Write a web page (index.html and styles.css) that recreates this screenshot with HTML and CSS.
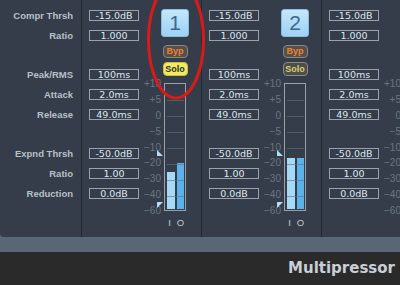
FILE: index.html
```html
<!DOCTYPE html>
<html>
<head>
  <meta charset="UTF-8">
  <title>Multipressor</title>
  <link rel="stylesheet" href="styles.css">
</head>
<body>
  <div class="plugin">
    <div class="window">
      <div class="panel">
        <div class="fields labels">
          <div class="group">
            <div class="row">Compr Thrsh</div>
            <div class="row">Ratio</div>
          </div>
          <div class="group">
            <div class="row">Peak/RMS</div>
            <div class="row">Attack</div>
            <div class="row">Release</div>
          </div>
          <div class="group">
            <div class="row">Expnd Thrsh</div>
            <div class="row">Ratio</div>
            <div class="row">Reduction</div>
          </div>
        </div>

        <!-- band 1 -->
        <div class="band">
          <div class="fields values">
            <div class="group">
              <div class="value">-15.0dB</div>
              <div class="value">1.000</div>
            </div>
            <div class="group">
              <div class="value">100ms</div>
              <div class="value">2.0ms</div>
              <div class="value">49.0ms</div>
            </div>
            <div class="group">
              <div class="value">-50.0dB</div>
              <div class="value">1.00</div>
              <div class="value">0.0dB</div>
            </div>
          </div>
          <div class="scale">
            <span>+10</span><span>+5</span><span>0</span><span>−5</span><span>−10</span>
            <span>−20</span><span>−30</span><span>−40</span><span>−60</span>
          </div>
          <div class="strip">
            <div class="num">1</div>
            <div class="btn byp">Byp</div>
            <div class="btn solo on">Solo</div>
            <div class="meter">
              <div class="bar in" style="height:37px"></div>
              <div class="bar out" style="height:46px"></div>
              <svg class="mark comp" width="6" height="6" viewBox="0 0 6 6"><polygon points="0,0 0,6 6,6"/></svg>
              <svg class="mark expd" width="6" height="6" viewBox="0 0 6 6"><polygon points="0,0 6,0 0,6"/></svg>
            </div>
            <div class="io"><span>I</span><span>O</span></div>
          </div>
        </div>

        <!-- band 2 -->
        <div class="band">
          <div class="fields values">
            <div class="group">
              <div class="value">-15.0dB</div>
              <div class="value">1.000</div>
            </div>
            <div class="group">
              <div class="value">100ms</div>
              <div class="value">2.0ms</div>
              <div class="value">49.0ms</div>
            </div>
            <div class="group">
              <div class="value">-50.0dB</div>
              <div class="value">1.00</div>
              <div class="value">0.0dB</div>
            </div>
          </div>
          <div class="scale">
            <span>+10</span><span>+5</span><span>0</span><span>−5</span><span>−10</span>
            <span>−20</span><span>−30</span><span>−40</span><span>−60</span>
          </div>
          <div class="strip">
            <div class="num">2</div>
            <div class="btn byp">Byp</div>
            <div class="btn solo">Solo</div>
            <div class="meter">
              <div class="bar in" style="height:51px"></div>
              <div class="bar out" style="height:51px"></div>
              <svg class="mark comp" width="6" height="6" viewBox="0 0 6 6"><polygon points="0,0 0,6 6,6"/></svg>
              <svg class="mark expd" width="6" height="6" viewBox="0 0 6 6"><polygon points="0,0 6,0 0,6"/></svg>
            </div>
            <div class="io"><span>I</span><span>O</span></div>
          </div>
        </div>

        <!-- band 3 -->
        <div class="band">
          <div class="fields values">
            <div class="group">
              <div class="value">-15.0dB</div>
              <div class="value">1.000</div>
            </div>
            <div class="group">
              <div class="value">100ms</div>
              <div class="value">2.0ms</div>
              <div class="value">49.0ms</div>
            </div>
            <div class="group">
              <div class="value">-50.0dB</div>
              <div class="value">1.00</div>
              <div class="value">0.0dB</div>
            </div>
          </div>
          <div class="scale">
            <span>+10</span><span>+5</span><span>0</span><span>−5</span><span>−10</span>
            <span>−20</span><span>−30</span><span>−40</span><span>−60</span>
          </div>
          <div class="strip">
            <div class="num">3</div>
            <div class="btn byp">Byp</div>
            <div class="btn solo">Solo</div>
            <div class="meter">
              <div class="bar in" style="height:40px"></div>
              <div class="bar out" style="height:40px"></div>
            </div>
            <div class="io"><span>I</span><span>O</span></div>
          </div>
        </div>
      </div>
    </div>

    <div class="footer">Multipressor</div>

    <!-- red annotation ring drawn over band 1 -->
    <svg class="ring" width="60" height="120" viewBox="0 0 60 120">
      <ellipse cx="30" cy="60" rx="27.5" ry="58" fill="none" stroke="#d91a1a" stroke-width="3"/>
    </svg>
  </div>
</body>
</html>
```

FILE: styles.css
```css
body {
  margin: 0;
  width: 400px;
  height: 285px;
  overflow: hidden;
  background-color: #2a2a2a;
  font-family: "Liberation Sans", Arial, sans-serif;
}
.plugin {
  position: relative;
  height: 285px;
  overflow: hidden;
}
.window {
  height: 252px;
  background-color: #596676;
}
.panel {
  display: flex;
  height: 237px;
  background-color: #343d49;
  border-bottom-left-radius: 4px;
  overflow: hidden;
}
.fields {
  display: flex;
  flex-direction: column;
  padding-top: 10px;
}
.group {
  display: flex;
  flex-direction: column;
  gap: 9px;
}
.group + .group {
  margin-top: 28px;
}
.labels {
  flex: none;
  width: 81px;
  box-sizing: border-box;
  padding-right: 8px;
}
.row {
  height: 11px;
  line-height: 11px;
  text-align: right;
  font-size: 9.5px;
  font-weight: bold;
  color: #b8c0c9;
  white-space: nowrap;
}
.band {
  flex: none;
  display: flex;
  width: 120px;
  box-sizing: border-box;
  border-left: 1px solid #222931;
}
.values {
  flex: none;
  width: 50px;
  margin-left: 7px;
}
.value {
  height: 11px;
  box-sizing: border-box;
  border: 1px solid #9aa3ad;
  font-family: "DejaVu Sans", sans-serif;
  font-size: 9.5px;
  line-height: 9px;
  text-align: center;
  color: #dfe6ee;
}
.scale {
  flex: none;
  width: 22px;
  height: 137px;
  margin-top: 79px;
  display: flex;
  flex-direction: column;
  justify-content: space-between;
  align-items: flex-end;
}
.scale span {
  font-size: 10px;
  line-height: 10px;
  color: #6b7581;
}
.strip {
  flex: none;
  width: 28px;
  display: flex;
  flex-direction: column;
  align-items: center;
}
.num {
  margin-top: 9px;
  width: 28px;
  height: 28px;
  box-sizing: border-box;
  border: 1px solid #86bde0;
  border-radius: 3px;
  background: linear-gradient(#c4e7fb, #9dd1f2);
  color: #3c6892;
  font-size: 21px;
  line-height: 26px;
  text-align: center;
}
.btn {
  width: 25px;
  box-sizing: border-box;
  border: 1px solid #8a8885;
  border-radius: 4px;
  font-size: 9px;
  font-weight: bold;
  text-align: center;
}
.byp {
  margin-top: 8px;
  height: 13px;
  line-height: 11px;
  background-color: #564f4c;
  color: #ea842f;
}
.solo {
  margin-top: 4px;
  height: 14px;
  line-height: 12px;
  background-color: #4b4e4d;
  border-color: #8f8d78;
  color: #d9d26c;
}
.solo.on {
  background-color: #f4ea62;
  border-color: #c9c043;
  color: #2d2d2d;
}
.meter {
  position: relative;
  margin-top: 7px;
  width: 22px;
  height: 128px;
  box-sizing: border-box;
  border: 1px solid #98a1ab;
  display: flex;
  align-items: flex-end;
  gap: 2px;
  padding: 0 1px 1px 2px;
}
.meter::after {
  content: "";
  position: absolute;
  top: 0;
  bottom: 0;
  left: 2px;
  right: 1px;
  background: repeating-linear-gradient(to bottom, transparent 0 15px, rgba(100, 115, 130, 0.6) 15px 16px);
  background-position: 0 1px;
}
.bar.in {
  width: 8px;
  background-color: #a5d9f5;
}
.bar.out {
  width: 7px;
  background-color: #5bb2e8;
}
.mark {
  position: absolute;
  left: -8px;
  fill: #b2ddf6;
}
.mark.comp {
  top: 66px;
}
.mark.expd {
  top: 118px;
}
.io {
  display: flex;
  width: 22px;
  margin-top: 7px;
}
.io span {
  flex: 1;
  text-align: center;
  font-size: 9.5px;
  line-height: 10px;
  color: #c2cad2;
}
.footer {
  height: 33px;
  box-sizing: border-box;
  padding: 7px 5px 0 0;
  text-align: right;
  font-family: "DejaVu Sans", sans-serif;
  font-size: 15px;
  font-weight: bold;
  color: #c8cfd7;
}
.ring {
  position: absolute;
  left: 146px;
  top: -20px;
}
```
